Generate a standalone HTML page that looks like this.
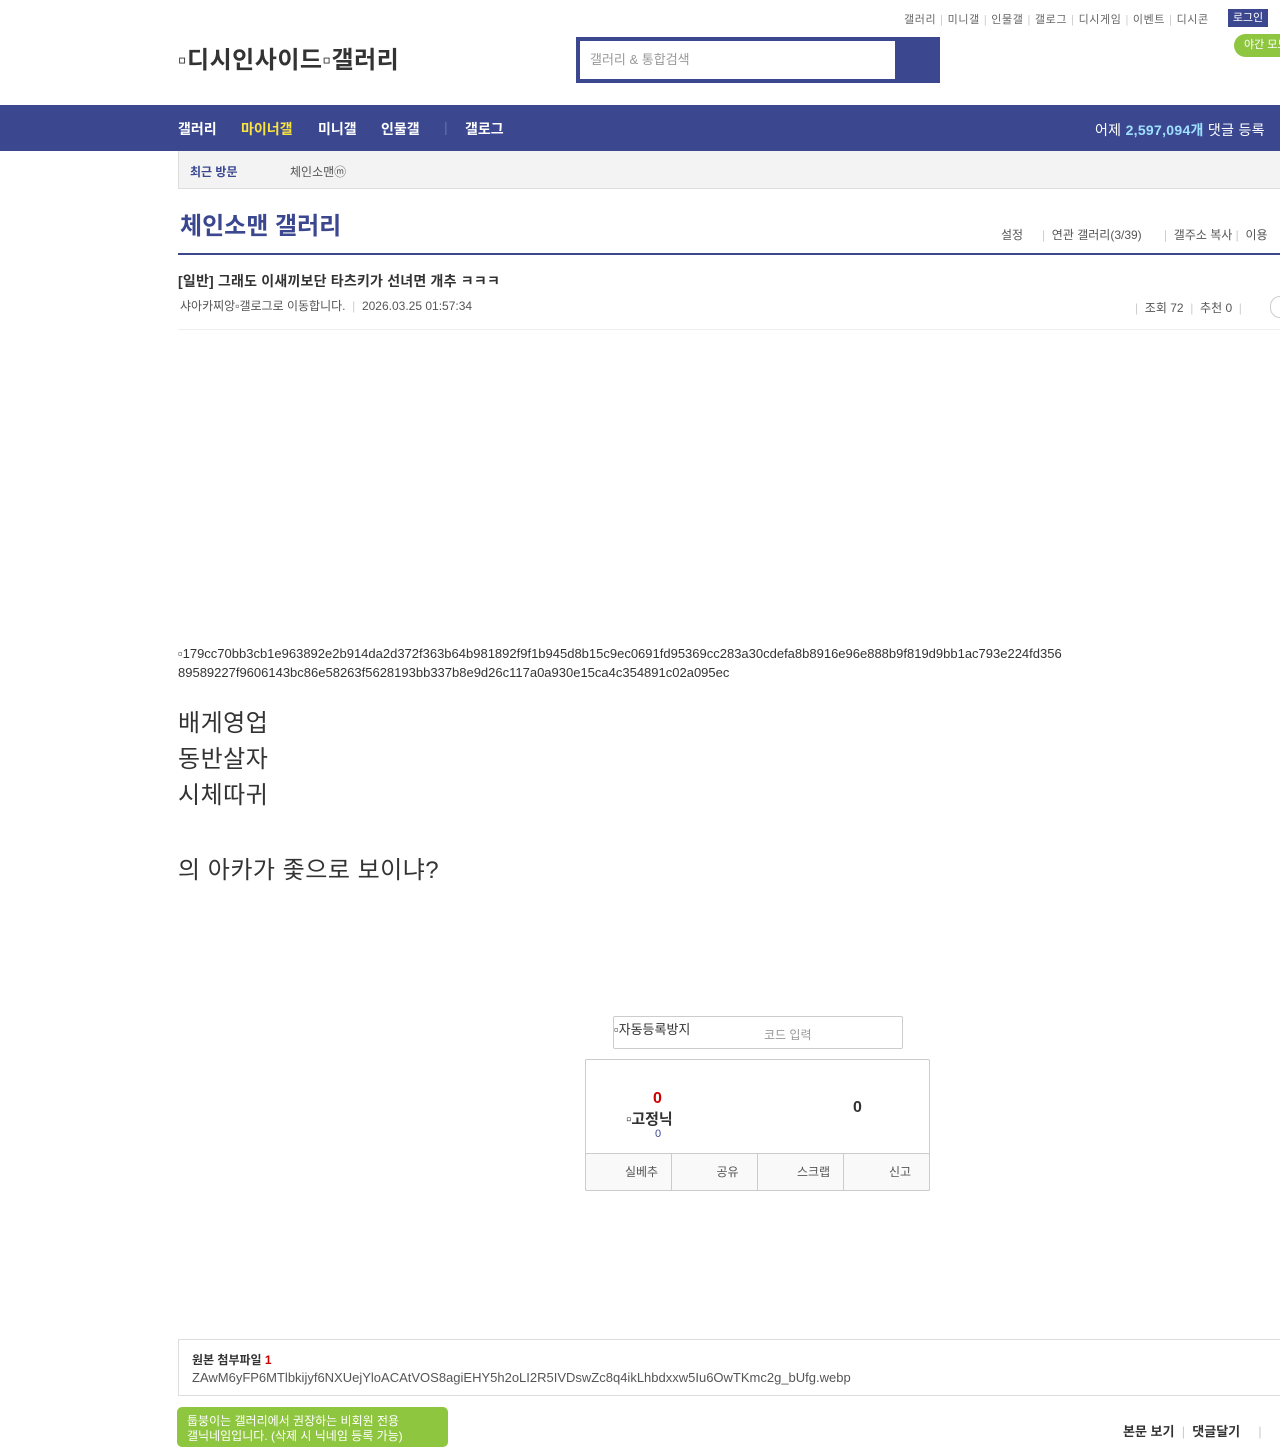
<!DOCTYPE html>
<html><head><meta charset="utf-8"><style>
*{margin:0;padding:0;box-sizing:border-box}
body{width:1280px;height:1440px;overflow:hidden;background:#fff;font-family:"Liberation Sans","Noto Sans CJK KR",sans-serif;color:#333;position:relative}
.a{position:absolute;white-space:nowrap}
.s{color:#ccc;margin:0 4px}
.n{position:absolute;top:119px;font-size:14px;font-weight:bold;color:#fff}
.c{position:absolute;top:0;width:86px;height:36px;line-height:36px;text-align:center;padding-left:26px;border-right:1px solid #ccc}
</style></head><body>
<div class="a" style="left:904px;top:11px;font-size:11px;color:#666;letter-spacing:0.6px">갤러리<span class="s">|</span>미니갤<span class="s">|</span>인물갤<span class="s">|</span>갤로그<span class="s">|</span>디시게임<span class="s">|</span>이벤트<span class="s">|</span>디시콘</div>
<div class="a" style="left:1228px;top:9px;width:40px;height:18px;background:#3b4890;color:#fff;font-size:11px;text-align:center;line-height:18px">로그인</div>
<div class="a" style="left:1234px;top:34px;width:60px;height:23px;background:#8fc63f;border-radius:12px;color:#fff;font-size:11px;line-height:23px;padding-left:10px">야간 모드</div>
<div class="a" style="left:178px;top:40px;font-size:24px;font-weight:bold;color:#333;letter-spacing:0.5px">▫디시인사이드▫갤러리</div>
<div class="a" style="left:576px;top:37px;width:364px;height:46px;background:#3b4890"></div>
<div class="a" style="left:580px;top:41px;width:315px;height:38px;background:#fff;font-size:13px;color:#999;line-height:38px;padding-left:10px">갤러리 &amp; 통합검색</div>
<div class="a" style="left:0;top:105px;width:1280px;height:46px;background:#3b4890"></div>
<div class="n" style="left:178px">갤러리</div>
<div class="n" style="left:241px;color:#fce43d">마이너갤</div>
<div class="n" style="left:318px">미니갤</div>
<div class="n" style="left:381px">인물갤</div>
<div class="n" style="left:444px;color:#6570aa;font-weight:normal">|</div>
<div class="n" style="left:465px">갤로그</div>
<div class="a" style="left:1095px;top:120px;font-size:14px;color:#fff;letter-spacing:0.3px">어제 <b style="color:#9ee0ff">2,597,094개</b> 댓글 등록</div>
<div class="a" style="left:178px;top:151px;width:1102px;height:38px;background:#f3f3f3;border:1px solid #ddd;border-top:none;border-right:none"></div>
<div class="a" style="left:190px;top:163px;font-size:12px;font-weight:bold;color:#3b4890">최근 방문</div>
<div class="a" style="left:290px;top:163px;font-size:12px;color:#555">체인소맨ⓜ</div>
<div class="a" style="left:180px;top:206px;font-size:24px;font-weight:bold;color:#3b4890">체인소맨 갤러리</div>
<div class="a" style="left:1001px;top:226px;font-size:12px;color:#555">설정</div>
<div class="a" style="left:1042px;top:226px;font-size:12px;color:#555"><span style="color:#ccc">|</span>&nbsp; 연관 갤러리(3/39)</div>
<div class="a" style="left:1164px;top:226px;font-size:12px;color:#555"><span style="color:#ccc">|</span>&nbsp; 갤주소 복사 <span style="color:#ccc">|</span>&nbsp; 이용</div>
<div class="a" style="left:178px;top:253px;width:1102px;height:2px;background:#3b4890"></div>
<div class="a" style="left:178px;top:271px;font-size:14px;font-weight:bold;color:#333;letter-spacing:0.2px">[일반] 그래도 이새끼보단 타츠키가 선녀면 개추 ㅋㅋㅋ</div>
<div class="a" style="left:180px;top:297px;font-size:12px;color:#555">샤아카찌앙▫갤로그로 이동합니다. &nbsp;<span style="color:#ccc">|</span> &nbsp;2026.03.25 01:57:34</div>
<div class="a" style="left:1135px;top:299px;font-size:12px;color:#555"><span style="color:#ccc">|</span> &nbsp;조회 72 &nbsp;<span style="color:#ccc">|</span> &nbsp;추천 0 &nbsp;<span style="color:#ccc">|</span></div>
<div class="a" style="left:1270px;top:296px;width:20px;height:22px;border:1px solid #ccc;border-radius:11px"></div>
<div class="a" style="left:178px;top:329px;width:1102px;height:1px;background:#eee"></div>
<div class="a" style="left:178px;top:644px;font-size:13px;color:#333;line-height:19px">▫179cc70bb3cb1e963892e2b914da2d372f363b64b981892f9f1b945d8b15c9ec0691fd95369cc283a30cdefa8b8916e96e888b9f819d9bb1ac793e224fd356<br>89589227f9606143bc86e58263f5628193bb337b8e9d26c117a0a930e15ca4c354891c02a095ec</div>
<div class="a" style="left:178px;top:706px;font-size:24px;line-height:36px;color:#333;letter-spacing:0.5px">배게영업<br>동반살자<br>시체따귀</div>
<div class="a" style="left:178px;top:850px;font-size:24px;color:#333;letter-spacing:0.5px">의 아카가 좇으로 보이냐?</div>
<div class="a" style="left:613px;top:1016px;width:290px;height:33px;border:1px solid #ccc;border-radius:2px"></div>
<div class="a" style="left:614px;top:1019px;font-size:13px;color:#333">▫자동등록방지</div>
<div class="a" style="left:764px;top:1026px;font-size:12px;color:#999">코드 입력</div>
<div class="a" style="left:585px;top:1059px;width:345px;height:132px;border:1px solid #ccc;border-radius:2px"></div>
<div class="a" style="left:585px;top:1153px;width:345px;height:38px;background:#f9f9f9;border:1px solid #ccc;border-radius:2px;font-size:12px;color:#555">
<div class="c" style="left:0">실베추</div>
<div class="c" style="left:86px">공유</div>
<div class="c" style="left:172px">스크랩</div>
<div class="c" style="left:258px;border-right:none">신고</div></div>
<div class="a" style="left:653px;top:1090px;font-size:16px;font-weight:bold;color:#c00">0</div>
<div class="a" style="left:626px;top:1108px;font-size:15px;font-weight:bold;color:#333">▫고정닉</div>
<div class="a" style="left:655px;top:1128px;font-size:11px;color:#3b4890">0</div>
<div class="a" style="left:853px;top:1099px;font-size:16px;font-weight:bold;color:#333">0</div>
<div class="a" style="left:178px;top:1339px;width:1102px;height:57px;border:1px solid #ddd;border-right:none"></div>
<div class="a" style="left:192px;top:1351px;font-size:12px;font-weight:bold;color:#333">원본 첨부파일 <span style="color:#c00">1</span></div>
<div class="a" style="left:192px;top:1370px;font-size:13px;color:#555">ZAwM6yFP6MTlbkijyf6NXUejYloACAtVOS8agiEHY5h2oLI2R5IVDswZc8q4ikLhbdxxw5Iu6OwTKmc2g_bUfg.webp</div>
<div class="a" style="left:177px;top:1407px;width:271px;height:40px;background:#8fc63f;border-radius:5px;color:#fff;font-size:12px;padding:7px 10px;line-height:15px">툽붕이는 갤러리에서 권장하는 비회원 전용<br>갤닉네임입니다. (삭제 시 닉네임 등록 가능)</div>
<div class="a" style="left:1123px;top:1421px;font-size:13px;font-weight:bold;color:#333">본문 보기 &nbsp;<span style="color:#ccc;font-weight:normal">|</span> &nbsp;댓글달기 &nbsp;&nbsp;&nbsp;&nbsp;<span style="color:#ccc;font-weight:normal">|</span></div>
</body></html>
